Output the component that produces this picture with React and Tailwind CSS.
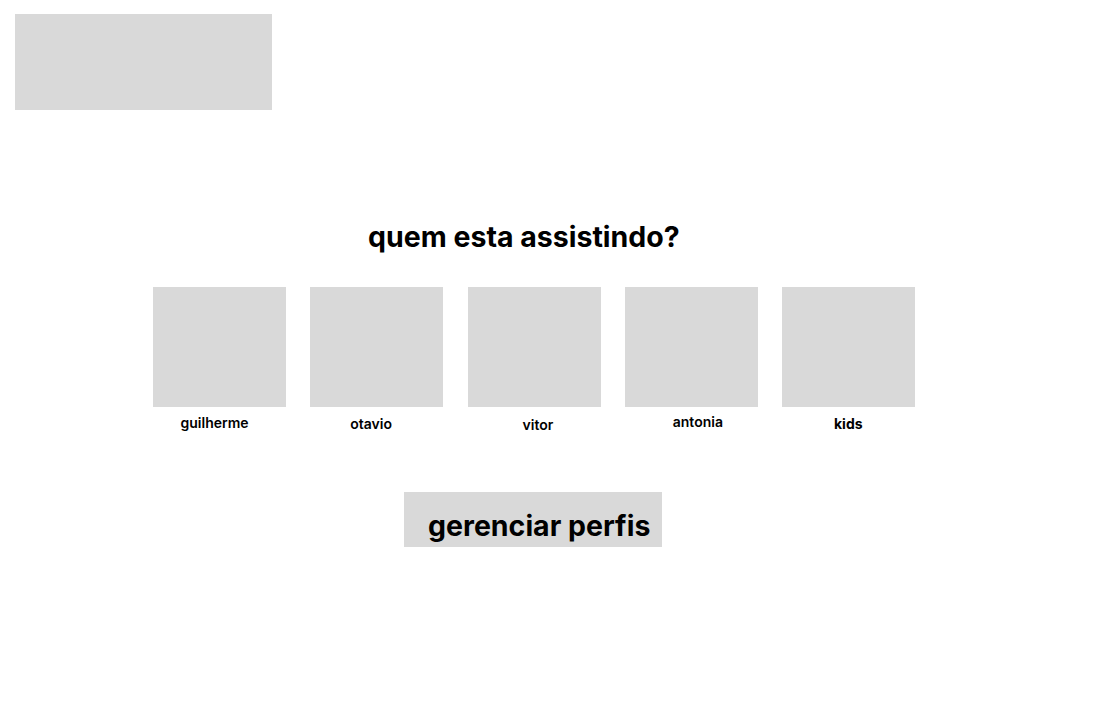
const profiles = [
  { name: "guilherme", pad: "pl-[27.5px]", top: "mt-[7px]", weight: "font-semibold" },
  { name: "otavio", pad: "pl-[40px]", top: "mt-[8px]", weight: "font-semibold" },
  { name: "vitor", pad: "pl-[55px]", top: "mt-[9px]", weight: "font-semibold" },
  { name: "antonia", pad: "pl-[48px]", top: "mt-[6px]", weight: "font-semibold" },
  { name: "kids", pad: "pl-[52px]", top: "mt-[8px]", weight: "font-bold" },
]

export default function App () {
  return (
    <div className="min-h-[720px] w-full bg-white text-black font-['Inter',sans-serif]">
      <div className="pt-[14px] pl-[15px]">
        <div className="w-[257px] h-[96px] bg-[#d9d9d9]" />
      </div>

      <h1 className="mt-[110px] ml-[368px] text-[28.5px] leading-[34px] font-bold whitespace-nowrap">
        quem esta assistindo?
      </h1>

      <div className="mt-[33px] ml-[153px] flex gap-[24.25px]">
        {profiles.map((p) => (
          <div key={p.name} className="w-[133px] flex flex-col">
            <div className="w-[133px] h-[120px] bg-[#d9d9d9]" />
            <span className={`${p.top} ${p.pad} text-[14px] leading-[17px] ${p.weight}`}>
              {p.name}
            </span>
          </div>
        ))}
      </div>

      <div className="mt-[59px] ml-[404px]">
        <div className="w-[258px] h-[55px] bg-[#d9d9d9] pl-[24px] pt-[17px] text-[28.5px] leading-[34px] font-bold whitespace-nowrap cursor-pointer">
          gerenciar perfis
        </div>
      </div>
    </div>
  )
}
